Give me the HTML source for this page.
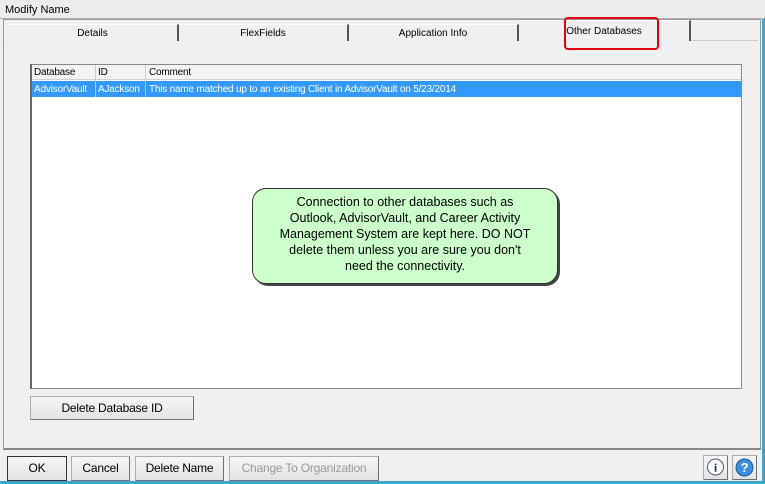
<!DOCTYPE html><html><head><style>
body{margin:0;width:765px;height:484px;background:#f0f0f0;font-family:"Liberation Sans",sans-serif;font-size:11px;position:relative;overflow:hidden;color:#000}
.a{position:absolute;box-sizing:border-box}
.btn{position:absolute;box-sizing:border-box;background:linear-gradient(#f6f6f6,#e3e3e3);border:1px solid #adadad;border-right-color:#707070;border-bottom-color:#707070;text-align:center;font-size:12px;letter-spacing:-0.2px}
.tab{position:absolute;top:24px;height:17px;box-sizing:border-box;border-right:2px solid #555;border-top:1px solid #fff;text-align:center;font-size:10px;line-height:17px;background:#f0f0f0}
.t{position:absolute;font-size:10px;letter-spacing:-0.2px}
</style></head><body>
<div class="a" style="left:0;top:0;width:765px;height:19px;background:#ececec;border-bottom:1px solid #b0b0b0;font-size:11px;line-height:20px;padding-left:5px">Modify Name</div>
<div class="a" style="left:762px;top:19px;width:3px;height:465px;background:#3aa6c8"></div>
<div class="a" style="left:0;top:481px;width:765px;height:3px;background:#3aa6c8"></div>
<div class="a" style="left:3px;top:19px;width:758px;height:431px;border:1px solid #9a9a9a;border-bottom:2px solid #888"></div>
<div class="a" style="left:7px;top:40px;width:751px;height:1px;background:#ccc"></div>
<div class="tab" style="left:8px;width:171px">Details</div>
<div class="tab" style="left:179px;width:170px">FlexFields</div>
<div class="tab" style="left:349px;width:170px">Application Info</div>
<div class="tab" style="left:519px;width:172px;top:20px;height:21px;line-height:22px;border-bottom:none">Other Databases</div>
<div class="a" style="left:564px;top:17px;width:95px;height:33px;border:2px solid #e00010;border-radius:4px"></div>
<div class="a" style="left:30px;top:64px;width:712px;height:325px;background:#fff;border:1px solid #888;border-left:2px solid #666"></div>
<div class="a" style="left:32px;top:65px;width:709px;height:15px;background:#f4f4f4;border-bottom:1px solid #d0d0d0"></div>
<div class="t" style="left:34px;top:67px">Database</div>
<div class="a" style="left:95px;top:65px;width:1px;height:32px;background:#ccc"></div>
<div class="t" style="left:98px;top:67px">ID</div>
<div class="a" style="left:145px;top:65px;width:1px;height:32px;background:#ccc"></div>
<div class="t" style="left:149px;top:67px">Comment</div>
<div class="a" style="left:32px;top:81px;width:709px;height:16px;background:#3399ff"></div>
<div class="a" style="left:95px;top:81px;width:1px;height:16px;background:#aad0ff"></div>
<div class="a" style="left:145px;top:81px;width:1px;height:16px;background:#aad0ff"></div>
<div class="t" style="left:34px;top:84px;color:#fff">AdvisorVault</div>
<div class="t" style="left:98px;top:84px;color:#fff">AJackson</div>
<div class="t" style="left:149px;top:84px;color:#fff">This name matched up to an existing Client in AdvisorVault on 5/23/2014</div>
<div class="a" style="left:252px;top:188px;width:306px;height:96px;background:#ccffcc;border:1px solid #333;border-radius:14px;box-shadow:2px 2px 0 #444;text-align:center;font-size:12.5px;line-height:16px;padding-top:5px">Connection to other databases such as<br>Outlook, AdvisorVault, and Career Activity<br>Management System are kept here. DO NOT<br>delete them unless you are sure you don't<br>need the connectivity.</div>
<div class="btn" style="left:30px;top:396px;width:164px;height:24px;line-height:22px">Delete Database ID</div>
<div class="btn" style="left:7px;top:456px;width:60px;height:25px;line-height:23px;border:1px solid #333">OK</div>
<div class="btn" style="left:71px;top:456px;width:59px;height:25px;line-height:23px">Cancel</div>
<div class="btn" style="left:135px;top:456px;width:89px;height:25px;line-height:23px">Delete Name</div>
<div class="btn" style="left:229px;top:456px;width:150px;height:25px;line-height:23px;color:#999">Change To Organization</div>
<div class="btn" style="left:703px;top:455px;width:25px;height:25px"><svg width="23" height="23"><circle cx="11.5" cy="11" r="8" fill="#fff" stroke="#557"/><text x="11.5" y="15.5" font-size="12" font-weight="bold" fill="#134" text-anchor="middle" font-family="Liberation Serif">i</text></svg></div>
<div class="btn" style="left:732px;top:455px;width:25px;height:25px"><svg width="23" height="23"><circle cx="11.5" cy="11.5" r="8.5" fill="#3c8ee0" stroke="#1a5a9a"/><text x="11.5" y="16" font-size="13" font-weight="bold" fill="#fff" text-anchor="middle">?</text></svg></div>
</body></html>
